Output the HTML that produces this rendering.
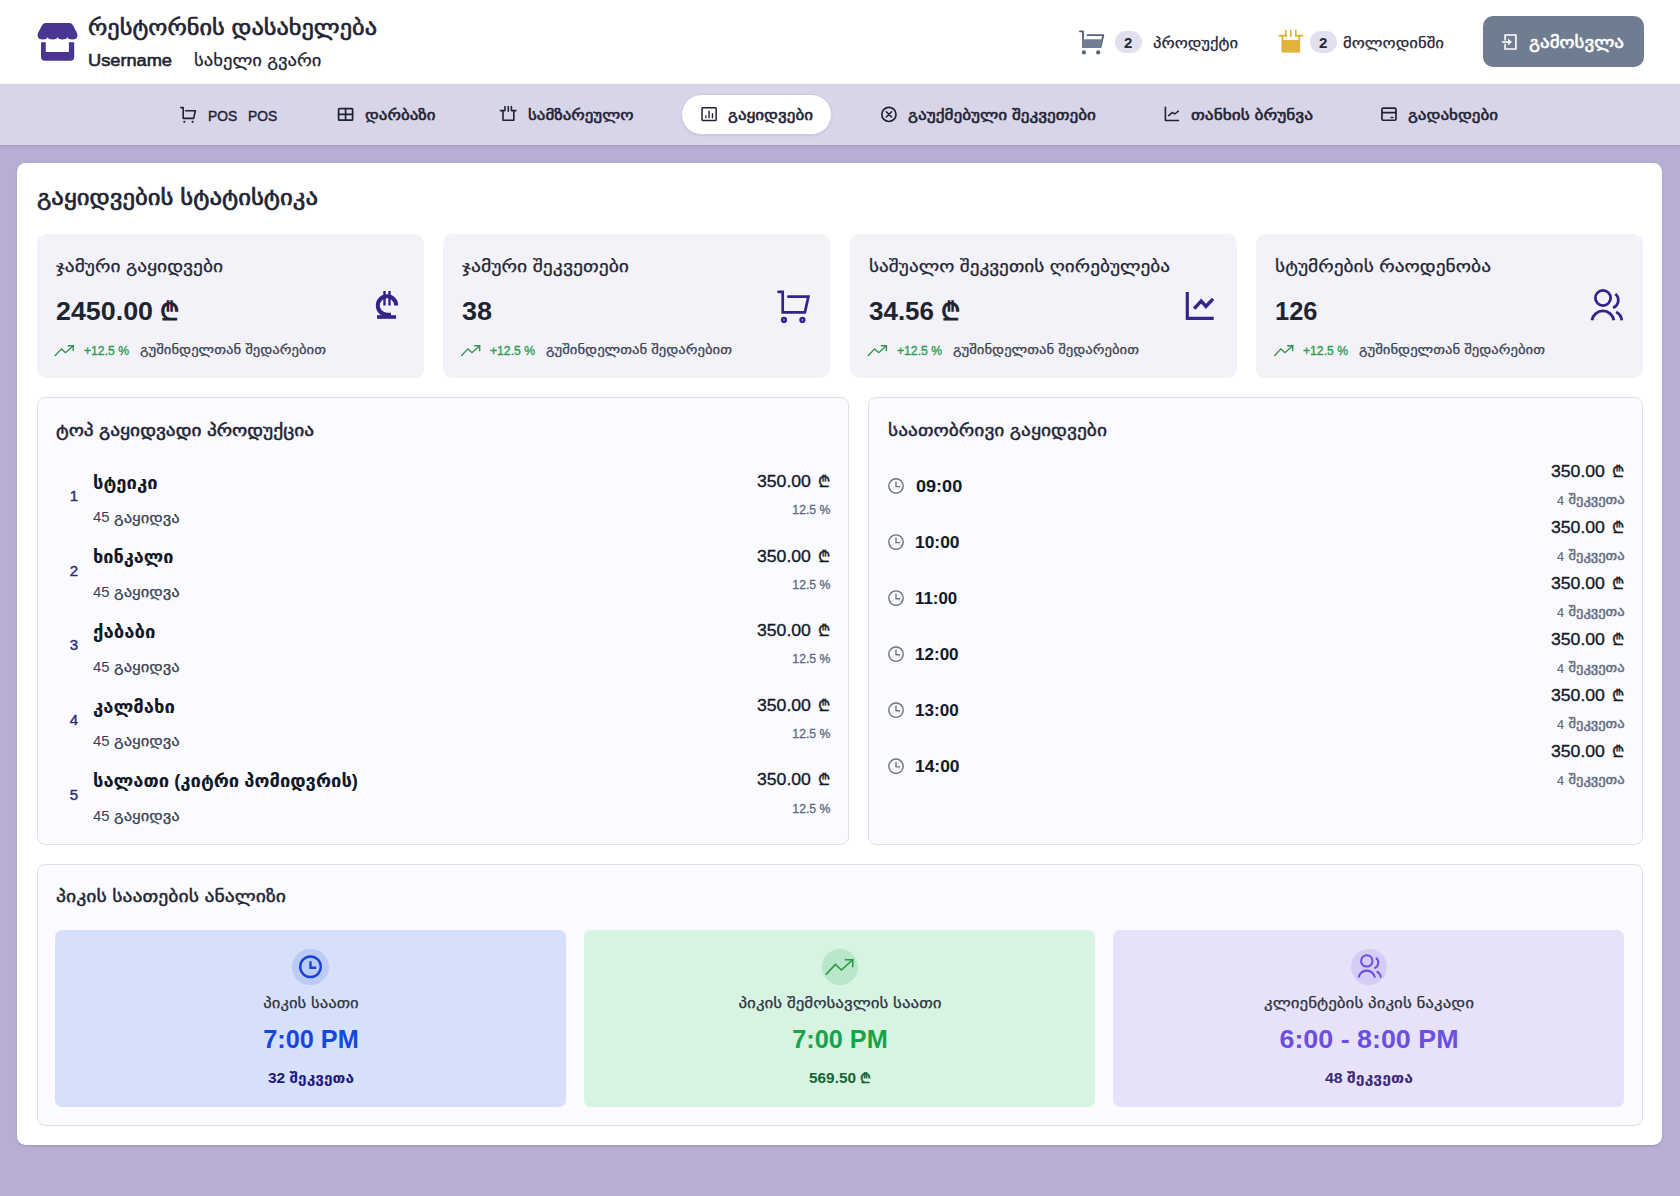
<!DOCTYPE html>
<html lang="ka">
<head>
<meta charset="utf-8">
<title>გაყიდვების სტატისტიკა</title>
<style>
html,body{margin:0;padding:0}
body{width:1680px;height:1196px;position:relative;overflow:hidden;background:#b8add3;
 font-family:"Liberation Sans","DejaVu Sans",sans-serif;color:#1f2433}
.sec{position:absolute;left:0;top:0;width:1680px;height:1196px;display:block}
.b{position:absolute;box-sizing:border-box}
.t{position:absolute;white-space:nowrap;line-height:1;display:block;-webkit-text-stroke-color:currentColor}
svg{position:absolute;overflow:visible}
.hdr{left:0;top:0;width:1680px;height:84px;background:#fff}
.nav{left:0;top:84px;width:1680px;height:61px;background:#d9d5e9;box-shadow:0 1px 3px rgba(70,60,100,.2)}
.pill{left:681.4px;top:93.8px;width:151px;height:41.4px;border-radius:21px;background:#fff;border:1px solid #cfc9e2;box-shadow:0 1px 2px rgba(60,40,110,.10)}
.main{left:17.4px;top:163.3px;width:1644.8px;height:981.6px;background:#fff;border-radius:8.5px;box-shadow:0 1px 2px rgba(60,50,90,.22)}
.stat{top:234.1px;width:387px;height:143.8px;background:#f3f2f9;border-radius:9px}
.panel{background:#fafaff;border:1px solid #e0dfe9;border-radius:8px}
.badge{top:30.8px;width:27.5px;height:22.5px;border-radius:11px;background:#e1e0ef}
.btn{left:1482.6px;top:16.3px;width:161px;height:50.8px;border-radius:10px;background:#707d91}
.pk{top:929.6px;width:511.1px;height:177.5px;border-radius:7px}
.circ{top:948.5px;width:36.5px;height:36.5px;border-radius:50%}
</style>
</head>
<body>
<header class="sec">
<div class="b hdr"></div>
<div class="b badge" style="left:1114.5px"></div>
<div class="b badge" style="left:1309.5px"></div>
<div class="b btn"></div>
<svg width="1680" height="1196" viewBox="0 0 1680 1196" style="left:0;top:0" aria-hidden="true">
<path fill="#4b3593" d="M45.6,23 H69.4 Q71.7,23 72.8,25 L76.8,32.6 Q77.8,34.6 77.2,36.8 A4.92,2.9 0 0 1 67.37,36.8 A4.92,2.9 0 0 1 57.55,36.8 A4.92,2.9 0 0 1 47.72,36.8 A4.92,2.9 0 0 1 37.9,36.8 Q37.2,34.6 38.2,32.6 L42.2,25 Q43.3,23 45.6,23 Z"/>
<path fill="#4b3593" d="M41,42.3 H45.8 V51.9 H68.9 V42.3 H74.2 V57 Q74.2,60.7 70.5,60.7 H44.7 Q41,60.7 41,57 Z"/>
<g stroke="#566277" stroke-width="1.9" fill="none" stroke-linecap="round" stroke-linejoin="round"><path d="M1080,31.4 H1083 V47"/><path d="M1087.6,35.1 H1103.3 L1100.6,47"/></g>
<path fill="#6f7e95" d="M1082.1,39.3 H1102.6 L1100.6,47.9 H1082.1 Z"/>
<circle cx="1083.9" cy="52.4" r="2.1" fill="#566277"/><circle cx="1098.2" cy="52.4" r="2.1" fill="#566277"/>
<g stroke="#e2b33c" fill="none" stroke-linecap="round"><path stroke-width="1.9" d="M1279.3,35.8 H1285.8 M1295.8,35.8 H1302.2"/><path stroke-width="1.7" d="M1285.8,30.6 V36 M1290.8,30.6 V36.4 M1295.8,30.6 V36"/><path stroke-width="1.8" stroke-linecap="butt" d="M1282.4,36 V41 M1299.2,36 V41"/></g>
<rect x="1281.5" y="40" width="18.6" height="12.6" fill="#e2b33c"/>
<g stroke="#fff" stroke-width="1.6" fill="none" stroke-linecap="butt" stroke-linejoin="miter"><path d="M1505.1,40.4 V35 H1515.9 V49 H1505.1 V43.8"/><path d="M1502,42 H1509"/></g><path fill="#fff" d="M1508,38.6 L1512,42 L1508,45.4 Z"/>
</svg>
<span class="t" style="font-size:21.4px;top:17.5px;-webkit-text-stroke:0.6px;left:88.3px;transform-origin:0 50%;transform:scaleX(1.1366);">რესტორნის დასახელება</span>
<span class="t" style="font-size:17px;top:52.22px;-webkit-text-stroke:0.6px;left:88.3px;transform-origin:0 50%;transform:scaleX(1.0711);">Username</span>
<span class="t" style="font-size:17.12px;top:51.92px;-webkit-text-stroke:0.25px;left:194.2px;transform-origin:0 50%;transform:scaleX(1.0902);">სახელი გვარი</span>
<span class="t" style="font-size:15px;top:34.71px;color:#1f2937;font-weight:700;left:1128.2px;transform:translateX(-50%) scaleX(1.0000);">2</span>
<span class="t" style="font-size:14.98px;top:35.33px;-webkit-text-stroke:0.25px;left:1152.5px;transform-origin:0 50%;transform:scaleX(1.1102);">პროდუქტი</span>
<span class="t" style="font-size:15px;top:34.71px;color:#1f2937;font-weight:700;left:1323.2px;transform:translateX(-50%) scaleX(1.0000);">2</span>
<span class="t" style="font-size:14.98px;top:35.33px;-webkit-text-stroke:0.25px;left:1343px;transform-origin:0 50%;transform:scaleX(1.1147);">მოლოდინში</span>
<span class="t" style="font-size:17.12px;top:34.42px;color:#fff;-webkit-text-stroke:0.55px;left:1529px;transform-origin:0 50%;transform:scaleX(1.1093);">გამოსვლა</span>
</header>
<nav class="sec">
<div class="b nav"></div>
<div class="b pill"></div>
<svg width="1680" height="1196" viewBox="0 0 1680 1196" style="left:0;top:0" aria-hidden="true">
<g stroke="#1f2233" stroke-width="1.6" fill="none" stroke-linejoin="round" stroke-linecap="round">
<path d="M180.8,107.6 H183.2 V118.4 H193.6 L195.4,110.8 H185.6"/>
<rect x="338.6" y="108.6" width="14" height="11.6" rx="0.8" stroke-width="1.7"/><path stroke-width="1.7" d="M345.6,108.6 V120.2 M338.6,114.4 H352.6"/>
<path d="M500.4,110.6 H505 V106.6 M511.4,106.6 V110.6 H516 M508.3,106.6 V111.2 M503,110.6 V120.3 H513.8 V110.6"/>
<rect x="702.05" y="107.75" width="14.1" height="12.7" rx="0.7" stroke-width="1.5"/><path stroke-width="1.4" d="M705.8,116 V117.6 M709.05,111.3 V117.8 M712.45,113.6 V117.8"/>
<circle cx="888.9" cy="114.4" r="7.1" stroke-width="1.7"/><path d="M886.3,111.8 L891.5,117 M891.5,111.8 L886.3,117"/>
<path d="M1165.4,107.4 V120.5 H1178.4"/><path stroke-width="1.5" d="M1168.7,115.6 L1172.4,112.4 L1174.7,114 L1178.3,111.1"/>
<rect x="1381.95" y="108.15" width="14" height="12.1" rx="1.2" stroke-width="1.7"/><path d="M1381.95,112.65 H1395.95 M1391.2,117.45 H1392.8"/>
</g>
<circle cx="184.3" cy="121.8" r="1.1" fill="#1f2233"/><circle cx="192.6" cy="121.8" r="1.1" fill="#1f2233"/>
</svg>
<span class="t" style="font-size:15px;top:107.51px;color:#1f2233;-webkit-text-stroke:0.45px;left:207.5px;transform-origin:0 50%;transform:scaleX(0.9215);">POS</span>
<span class="t" style="font-size:15px;top:107.51px;color:#1f2233;-webkit-text-stroke:0.45px;left:247.5px;transform-origin:0 50%;transform:scaleX(0.9215);">POS</span>
<span class="t" style="font-size:14.98px;top:107.33px;color:#1f2233;-webkit-text-stroke:0.55px;left:365.3px;transform-origin:0 50%;transform:scaleX(1.1305);">დარბაზი</span>
<span class="t" style="font-size:14.98px;top:107.33px;color:#1f2233;-webkit-text-stroke:0.55px;left:527.5px;transform-origin:0 50%;transform:scaleX(1.1299);">სამზარეულო</span>
<span class="t" style="font-size:14.98px;top:107.33px;color:#1f2233;-webkit-text-stroke:0.55px;left:728.3px;transform-origin:0 50%;transform:scaleX(1.1362);">გაყიდვები</span>
<span class="t" style="font-size:14.98px;top:107.33px;color:#1f2233;-webkit-text-stroke:0.55px;left:908px;transform-origin:0 50%;transform:scaleX(1.1465);">გაუქმებული შეკვეთები</span>
<span class="t" style="font-size:14.98px;top:107.33px;color:#1f2233;-webkit-text-stroke:0.55px;left:1190.7px;transform-origin:0 50%;transform:scaleX(1.1559);">თანხის ბრუნვა</span>
<span class="t" style="font-size:14.98px;top:107.33px;color:#1f2233;-webkit-text-stroke:0.55px;left:1407.8px;transform-origin:0 50%;transform:scaleX(1.1348);">გადახდები</span>
</nav>
<main class="sec">
<div class="b main"></div>
<div class="b stat" style="left:37px"></div>
<div class="b stat" style="left:443px"></div>
<div class="b stat" style="left:850px"></div>
<div class="b stat" style="left:1256px"></div>
<div class="b panel" style="left:36.9px;top:397.1px;width:812.2px;height:448px"></div>
<div class="b panel" style="left:868.2px;top:397.1px;width:775px;height:448px"></div>
<div class="b panel" style="left:36.9px;top:864px;width:1606.3px;height:261.9px"></div>
<div class="b pk" style="left:55px;background:#d6e0fb"></div>
<div class="b pk" style="left:584.2px;background:#d7f4e2"></div>
<div class="b pk" style="left:1113.4px;background:#e7e2fa"></div>
<div class="b circ" style="left:292.2px;background:#bccbf6"></div>
<div class="b circ" style="left:821.6px;background:#b9e7c9"></div>
<div class="b circ" style="left:1350.7px;background:#d6cdf7"></div>
<svg width="1680" height="1196" viewBox="0 0 1680 1196" style="left:0;top:0" aria-hidden="true">
<g stroke="#33238a" fill="none"><path stroke-width="4" d="M396.2,305.5 A9.2,9.2 0 1 0 387,314.7 H391" stroke-linejoin="round"/><path stroke-width="3.6" d="M377,317 H396.1"/><path stroke-width="2.4" d="M384.5,291 V305.5 M389.5,291 V305.5"/></g>
<g stroke="#33238a" stroke-width="2.7" fill="none" stroke-linejoin="miter" stroke-linecap="round"><path d="M778.5,291.8 H782.7 V312.4 H804.9 L808.4,296.6 H788.4"/><circle cx="784" cy="319.9" r="1.9" stroke-width="2.4"/><circle cx="802.4" cy="319.9" r="1.9" stroke-width="2.4"/></g>
<g stroke="#33238a" fill="none"><path stroke-width="3.1" d="M1187.3,292.1 V318.35 H1213.7"/><path stroke-width="3.4" stroke-linejoin="miter" d="M1194.2,308.6 L1201.2,301 L1205.9,306.4 L1213,298.9"/></g>
<g transform="translate(1591,288.75) scale(1)" stroke="#33238a" stroke-width="2.8" fill="none" stroke-linecap="butt"><circle cx="12" cy="9.25" r="7.6"/><path d="M0.9,31.55 A11.15,11.15 0 0 1 22.9,31.55"/><path d="M24.3,5.25 A8,8 0 0 1 22,19.05"/><path d="M25.2,23.25 A11,11 0 0 1 30.8,31.55"/></g>
<g transform="translate(55.2,345.7) scale(1)" stroke="#2d9149" stroke-width="1.35" fill="none" stroke-linejoin="miter" stroke-linecap="round"><path d="M0,9.8 L6.2,3.2 L10.3,7 L18,0"/><path d="M13,0 H18 V4.8"/></g>
<g transform="translate(461.7,345.7) scale(1)" stroke="#2d9149" stroke-width="1.35" fill="none" stroke-linejoin="miter" stroke-linecap="round"><path d="M0,9.8 L6.2,3.2 L10.3,7 L18,0"/><path d="M13,0 H18 V4.8"/></g>
<g transform="translate(868.4,345.7) scale(1)" stroke="#2d9149" stroke-width="1.35" fill="none" stroke-linejoin="miter" stroke-linecap="round"><path d="M0,9.8 L6.2,3.2 L10.3,7 L18,0"/><path d="M13,0 H18 V4.8"/></g>
<g transform="translate(1274.7,345.7) scale(1)" stroke="#2d9149" stroke-width="1.35" fill="none" stroke-linejoin="miter" stroke-linecap="round"><path d="M0,9.8 L6.2,3.2 L10.3,7 L18,0"/><path d="M13,0 H18 V4.8"/></g>
<g stroke="#6b7280" stroke-width="1.4" fill="none" stroke-linecap="round" stroke-linejoin="round"><circle cx="896" cy="486.00" r="7.2"/><path d="M896,482.00 V486.60 H899.8"/></g>
<g stroke="#6b7280" stroke-width="1.4" fill="none" stroke-linecap="round" stroke-linejoin="round"><circle cx="896" cy="542.05" r="7.2"/><path d="M896,538.05 V542.65 H899.8"/></g>
<g stroke="#6b7280" stroke-width="1.4" fill="none" stroke-linecap="round" stroke-linejoin="round"><circle cx="896" cy="598.10" r="7.2"/><path d="M896,594.10 V598.70 H899.8"/></g>
<g stroke="#6b7280" stroke-width="1.4" fill="none" stroke-linecap="round" stroke-linejoin="round"><circle cx="896" cy="654.15" r="7.2"/><path d="M896,650.15 V654.75 H899.8"/></g>
<g stroke="#6b7280" stroke-width="1.4" fill="none" stroke-linecap="round" stroke-linejoin="round"><circle cx="896" cy="710.20" r="7.2"/><path d="M896,706.20 V710.80 H899.8"/></g>
<g stroke="#6b7280" stroke-width="1.4" fill="none" stroke-linecap="round" stroke-linejoin="round"><circle cx="896" cy="766.25" r="7.2"/><path d="M896,762.25 V766.85 H899.8"/></g>
<g stroke="#1844d2" stroke-width="2.4" fill="none" stroke-linecap="butt" stroke-linejoin="miter"><circle cx="310.5" cy="966.75" r="10.3"/><path d="M310.5,961.2 V967.8 H316.2"/></g>
<g transform="translate(826.3,959.7) scale(1.47)" stroke="#2e9848" stroke-width="1.1" fill="none" stroke-linejoin="miter" stroke-linecap="round"><path d="M0,9.8 L6.2,3.2 L10.3,7 L18,0"/><path d="M13,0 H18 V4.8"/></g>
<g transform="translate(1357.8,953.96) scale(0.75)" stroke="#6b4ee0" stroke-width="2.7" fill="none" stroke-linecap="butt"><circle cx="12" cy="9.25" r="7.6"/><path d="M0.9,31.55 A11.15,11.15 0 0 1 22.9,31.55"/><path d="M24.3,5.25 A8,8 0 0 1 22,19.05"/><path d="M25.2,23.25 A11,11 0 0 1 30.8,31.55"/></g>
</svg>
<span class="t" style="font-size:21.4px;top:188.1px;-webkit-text-stroke:0.65px;left:37.1px;transform-origin:0 50%;transform:scaleX(1.1556);">გაყიდვების სტატისტიკა</span>
<span class="t" style="font-size:17.12px;top:258.02px;-webkit-text-stroke:0.25px;left:55.5px;transform-origin:0 50%;transform:scaleX(1.1355);">ჯამური გაყიდვები</span>
<span class="t" style="font-size:25px;top:298.85px;color:#1f2430;font-weight:700;left:55.5px;transform-origin:0 50%;transform:scaleX(1.0733);">2450.00</span>
<span class="t" style="font-size:25px;top:298.85px;color:#1f2430;font-weight:700;left:159.5px;transform-origin:0 50%;transform:scaleX(1.0000);">₾</span>
<span class="t" style="font-size:12px;top:344.85px;color:#2f9d4e;-webkit-text-stroke:0.35px;left:83.5px;transform-origin:0 50%;transform:scaleX(1.0141);">+12.5 %</span>
<span class="t" style="font-size:12.84px;top:344.14px;color:#3b4252;-webkit-text-stroke:0.25px;left:139.7px;transform-origin:0 50%;transform:scaleX(1.1460);">გუშინდელთან შედარებით</span>
<span class="t" style="font-size:17.12px;top:258.02px;-webkit-text-stroke:0.25px;left:462px;transform-origin:0 50%;transform:scaleX(1.1485);">ჯამური შეკვეთები</span>
<span class="t" style="font-size:25px;top:298.85px;color:#1f2430;font-weight:700;left:462px;transform-origin:0 50%;transform:scaleX(1.0787);">38</span>
<span class="t" style="font-size:12px;top:344.85px;color:#2f9d4e;-webkit-text-stroke:0.35px;left:490px;transform-origin:0 50%;transform:scaleX(1.0141);">+12.5 %</span>
<span class="t" style="font-size:12.84px;top:344.14px;color:#3b4252;-webkit-text-stroke:0.25px;left:546.2px;transform-origin:0 50%;transform:scaleX(1.1460);">გუშინდელთან შედარებით</span>
<span class="t" style="font-size:17.12px;top:258.02px;-webkit-text-stroke:0.25px;left:868.7px;transform-origin:0 50%;transform:scaleX(1.1258);">საშუალო შეკვეთის ღირებულება</span>
<span class="t" style="font-size:25px;top:298.85px;color:#1f2430;font-weight:700;left:868.7px;transform-origin:0 50%;transform:scaleX(1.0390);">34.56</span>
<span class="t" style="font-size:25px;top:298.85px;color:#1f2430;font-weight:700;left:940.7px;transform-origin:0 50%;transform:scaleX(1.0000);">₾</span>
<span class="t" style="font-size:12px;top:344.85px;color:#2f9d4e;-webkit-text-stroke:0.35px;left:896.7px;transform-origin:0 50%;transform:scaleX(1.0141);">+12.5 %</span>
<span class="t" style="font-size:12.84px;top:344.14px;color:#3b4252;-webkit-text-stroke:0.25px;left:952.9px;transform-origin:0 50%;transform:scaleX(1.1460);">გუშინდელთან შედარებით</span>
<span class="t" style="font-size:17.12px;top:258.02px;-webkit-text-stroke:0.25px;left:1275px;transform-origin:0 50%;transform:scaleX(1.1363);">სტუმრების რაოდენობა</span>
<span class="t" style="font-size:25px;top:298.85px;color:#1f2430;font-weight:700;left:1275px;transform-origin:0 50%;transform:scaleX(1.0187);">126</span>
<span class="t" style="font-size:12px;top:344.85px;color:#2f9d4e;-webkit-text-stroke:0.35px;left:1303px;transform-origin:0 50%;transform:scaleX(1.0141);">+12.5 %</span>
<span class="t" style="font-size:12.84px;top:344.14px;color:#3b4252;-webkit-text-stroke:0.25px;left:1359.2px;transform-origin:0 50%;transform:scaleX(1.1460);">გუშინდელთან შედარებით</span>
<span class="t" style="font-size:17.12px;top:421.72px;-webkit-text-stroke:0.5px;left:55.7px;transform-origin:0 50%;transform:scaleX(1.1303);">ტოპ გაყიდვადი პროდუქცია</span>
<span class="t" style="font-size:15px;top:488.11px;color:#2d2a7a;-webkit-text-stroke:0.4px;left:74px;transform:translateX(-50%) scaleX(1.0000);">1</span>
<span class="t" style="font-size:17.66px;top:474.56px;color:#111827;font-weight:700;left:92.5px;transform-origin:0 50%;transform:scaleX(1.0419);">სტეიკი</span>
<span class="t" style="font-size:14px;top:510.36px;color:#374151;left:92.5px;transform-origin:0 50%;transform:scaleX(1.0592);">45</span>
<span class="t" style="font-size:14.98px;top:509.53px;color:#374151;-webkit-text-stroke:0.25px;left:113.5px;transform-origin:0 50%;transform:scaleX(1.1077);">გაყიდვა</span>
<span class="t" style="font-size:16px;top:473.86px;color:#111827;-webkit-text-stroke:0.3px;right:868.8px;transform-origin:100% 50%;transform:scaleX(1.1034);">350.00</span>
<span class="t" style="font-size:16px;top:473.86px;color:#111827;-webkit-text-stroke:0.3px;left:823.6px;transform:translateX(-50%) scaleX(1.0000);">₾</span>
<span class="t" style="font-size:12px;top:503.95px;color:#5d6980;-webkit-text-stroke:0.3px;right:850px;transform-origin:100% 50%;transform:scaleX(1.0171);">12.5 %</span>
<span class="t" style="font-size:15px;top:562.76px;color:#2d2a7a;-webkit-text-stroke:0.4px;left:74px;transform:translateX(-50%) scaleX(1.0000);">2</span>
<span class="t" style="font-size:17.66px;top:549.21px;color:#111827;font-weight:700;left:92.5px;transform-origin:0 50%;transform:scaleX(1.0251);">ხინკალი</span>
<span class="t" style="font-size:14px;top:585.01px;color:#374151;left:92.5px;transform-origin:0 50%;transform:scaleX(1.0592);">45</span>
<span class="t" style="font-size:14.98px;top:584.18px;color:#374151;-webkit-text-stroke:0.25px;left:113.5px;transform-origin:0 50%;transform:scaleX(1.1077);">გაყიდვა</span>
<span class="t" style="font-size:16px;top:548.51px;color:#111827;-webkit-text-stroke:0.3px;right:868.8px;transform-origin:100% 50%;transform:scaleX(1.1034);">350.00</span>
<span class="t" style="font-size:16px;top:548.51px;color:#111827;-webkit-text-stroke:0.3px;left:823.6px;transform:translateX(-50%) scaleX(1.0000);">₾</span>
<span class="t" style="font-size:12px;top:578.6px;color:#5d6980;-webkit-text-stroke:0.3px;right:850px;transform-origin:100% 50%;transform:scaleX(1.0171);">12.5 %</span>
<span class="t" style="font-size:15px;top:637.41px;color:#2d2a7a;-webkit-text-stroke:0.4px;left:74px;transform:translateX(-50%) scaleX(1.0000);">3</span>
<span class="t" style="font-size:17.66px;top:623.86px;color:#111827;font-weight:700;left:92.5px;transform-origin:0 50%;transform:scaleX(1.0543);">ქაბაბი</span>
<span class="t" style="font-size:14px;top:659.66px;color:#374151;left:92.5px;transform-origin:0 50%;transform:scaleX(1.0592);">45</span>
<span class="t" style="font-size:14.98px;top:658.83px;color:#374151;-webkit-text-stroke:0.25px;left:113.5px;transform-origin:0 50%;transform:scaleX(1.1077);">გაყიდვა</span>
<span class="t" style="font-size:16px;top:623.16px;color:#111827;-webkit-text-stroke:0.3px;right:868.8px;transform-origin:100% 50%;transform:scaleX(1.1034);">350.00</span>
<span class="t" style="font-size:16px;top:623.16px;color:#111827;-webkit-text-stroke:0.3px;left:823.6px;transform:translateX(-50%) scaleX(1.0000);">₾</span>
<span class="t" style="font-size:12px;top:653.25px;color:#5d6980;-webkit-text-stroke:0.3px;right:850px;transform-origin:100% 50%;transform:scaleX(1.0171);">12.5 %</span>
<span class="t" style="font-size:15px;top:712.06px;color:#2d2a7a;-webkit-text-stroke:0.4px;left:74px;transform:translateX(-50%) scaleX(1.0000);">4</span>
<span class="t" style="font-size:17.66px;top:698.51px;color:#111827;font-weight:700;left:92.5px;transform-origin:0 50%;transform:scaleX(1.0465);">კალმახი</span>
<span class="t" style="font-size:14px;top:734.31px;color:#374151;left:92.5px;transform-origin:0 50%;transform:scaleX(1.0592);">45</span>
<span class="t" style="font-size:14.98px;top:733.48px;color:#374151;-webkit-text-stroke:0.25px;left:113.5px;transform-origin:0 50%;transform:scaleX(1.1077);">გაყიდვა</span>
<span class="t" style="font-size:16px;top:697.81px;color:#111827;-webkit-text-stroke:0.3px;right:868.8px;transform-origin:100% 50%;transform:scaleX(1.1034);">350.00</span>
<span class="t" style="font-size:16px;top:697.81px;color:#111827;-webkit-text-stroke:0.3px;left:823.6px;transform:translateX(-50%) scaleX(1.0000);">₾</span>
<span class="t" style="font-size:12px;top:727.9px;color:#5d6980;-webkit-text-stroke:0.3px;right:850px;transform-origin:100% 50%;transform:scaleX(1.0171);">12.5 %</span>
<span class="t" style="font-size:15px;top:786.71px;color:#2d2a7a;-webkit-text-stroke:0.4px;left:74px;transform:translateX(-50%) scaleX(1.0000);">5</span>
<span class="t" style="font-size:17.66px;top:773.16px;color:#111827;font-weight:700;left:92.5px;transform-origin:0 50%;transform:scaleX(1.0406);">სალათი (კიტრი პომიდვრის)</span>
<span class="t" style="font-size:14px;top:808.96px;color:#374151;left:92.5px;transform-origin:0 50%;transform:scaleX(1.0592);">45</span>
<span class="t" style="font-size:14.98px;top:808.13px;color:#374151;-webkit-text-stroke:0.25px;left:113.5px;transform-origin:0 50%;transform:scaleX(1.1077);">გაყიდვა</span>
<span class="t" style="font-size:16px;top:772.46px;color:#111827;-webkit-text-stroke:0.3px;right:868.8px;transform-origin:100% 50%;transform:scaleX(1.1034);">350.00</span>
<span class="t" style="font-size:16px;top:772.46px;color:#111827;-webkit-text-stroke:0.3px;left:823.6px;transform:translateX(-50%) scaleX(1.0000);">₾</span>
<span class="t" style="font-size:12px;top:802.55px;color:#5d6980;-webkit-text-stroke:0.3px;right:850px;transform-origin:100% 50%;transform:scaleX(1.0171);">12.5 %</span>
<span class="t" style="font-size:17.12px;top:421.72px;-webkit-text-stroke:0.4px;left:887.5px;transform-origin:0 50%;transform:scaleX(1.1366);">საათობრივი გაყიდვები</span>
<span class="t" style="font-size:17px;top:478.02px;color:#111827;font-weight:700;left:915.5px;transform-origin:0 50%;transform:scaleX(1.0625);">09:00</span>
<span class="t" style="font-size:16px;top:464.16px;color:#111827;-webkit-text-stroke:0.3px;right:74.6px;transform-origin:100% 50%;transform:scaleX(1.1034);">350.00</span>
<span class="t" style="font-size:16px;top:464.16px;color:#111827;-webkit-text-stroke:0.3px;left:1617.8px;transform:translateX(-50%) scaleX(1.0000);">₾</span>
<span class="t" style="font-size:12px;top:494.55px;color:#5d6980;-webkit-text-stroke:0.2px;left:1557px;transform-origin:0 50%;transform:scaleX(1.0467);">4</span>
<span class="t" style="font-size:12.84px;top:493.84px;color:#5d6980;-webkit-text-stroke:0.4px;right:55.7px;transform-origin:100% 50%;transform:scaleX(1.1295);">შეკვეთა</span>
<span class="t" style="font-size:17px;top:534.07px;color:#111827;font-weight:700;left:914.6px;transform-origin:0 50%;transform:scaleX(1.0234);">10:00</span>
<span class="t" style="font-size:16px;top:520.21px;color:#111827;-webkit-text-stroke:0.3px;right:74.6px;transform-origin:100% 50%;transform:scaleX(1.1034);">350.00</span>
<span class="t" style="font-size:16px;top:520.21px;color:#111827;-webkit-text-stroke:0.3px;left:1617.8px;transform:translateX(-50%) scaleX(1.0000);">₾</span>
<span class="t" style="font-size:12px;top:550.6px;color:#5d6980;-webkit-text-stroke:0.2px;left:1557px;transform-origin:0 50%;transform:scaleX(1.0467);">4</span>
<span class="t" style="font-size:12.84px;top:549.89px;color:#5d6980;-webkit-text-stroke:0.4px;right:55.7px;transform-origin:100% 50%;transform:scaleX(1.1295);">შეკვეთა</span>
<span class="t" style="font-size:17px;top:590.12px;color:#111827;font-weight:700;left:914.6px;transform-origin:0 50%;transform:scaleX(0.9918);">11:00</span>
<span class="t" style="font-size:16px;top:576.26px;color:#111827;-webkit-text-stroke:0.3px;right:74.6px;transform-origin:100% 50%;transform:scaleX(1.1034);">350.00</span>
<span class="t" style="font-size:16px;top:576.26px;color:#111827;-webkit-text-stroke:0.3px;left:1617.8px;transform:translateX(-50%) scaleX(1.0000);">₾</span>
<span class="t" style="font-size:12px;top:606.65px;color:#5d6980;-webkit-text-stroke:0.2px;left:1557px;transform-origin:0 50%;transform:scaleX(1.0467);">4</span>
<span class="t" style="font-size:12.84px;top:605.94px;color:#5d6980;-webkit-text-stroke:0.4px;right:55.7px;transform-origin:100% 50%;transform:scaleX(1.1295);">შეკვეთა</span>
<span class="t" style="font-size:17px;top:646.17px;color:#111827;font-weight:700;left:914.6px;transform-origin:0 50%;transform:scaleX(1.0027);">12:00</span>
<span class="t" style="font-size:16px;top:632.31px;color:#111827;-webkit-text-stroke:0.3px;right:74.6px;transform-origin:100% 50%;transform:scaleX(1.1034);">350.00</span>
<span class="t" style="font-size:16px;top:632.31px;color:#111827;-webkit-text-stroke:0.3px;left:1617.8px;transform:translateX(-50%) scaleX(1.0000);">₾</span>
<span class="t" style="font-size:12px;top:662.7px;color:#5d6980;-webkit-text-stroke:0.2px;left:1557px;transform-origin:0 50%;transform:scaleX(1.0467);">4</span>
<span class="t" style="font-size:12.84px;top:661.99px;color:#5d6980;-webkit-text-stroke:0.4px;right:55.7px;transform-origin:100% 50%;transform:scaleX(1.1295);">შეკვეთა</span>
<span class="t" style="font-size:17px;top:702.22px;color:#111827;font-weight:700;left:914.6px;transform-origin:0 50%;transform:scaleX(1.0050);">13:00</span>
<span class="t" style="font-size:16px;top:688.36px;color:#111827;-webkit-text-stroke:0.3px;right:74.6px;transform-origin:100% 50%;transform:scaleX(1.1034);">350.00</span>
<span class="t" style="font-size:16px;top:688.36px;color:#111827;-webkit-text-stroke:0.3px;left:1617.8px;transform:translateX(-50%) scaleX(1.0000);">₾</span>
<span class="t" style="font-size:12px;top:718.75px;color:#5d6980;-webkit-text-stroke:0.2px;left:1557px;transform-origin:0 50%;transform:scaleX(1.0467);">4</span>
<span class="t" style="font-size:12.84px;top:718.04px;color:#5d6980;-webkit-text-stroke:0.4px;right:55.7px;transform-origin:100% 50%;transform:scaleX(1.1295);">შეკვეთა</span>
<span class="t" style="font-size:17px;top:758.27px;color:#111827;font-weight:700;left:914.6px;transform-origin:0 50%;transform:scaleX(1.0234);">14:00</span>
<span class="t" style="font-size:16px;top:744.41px;color:#111827;-webkit-text-stroke:0.3px;right:74.6px;transform-origin:100% 50%;transform:scaleX(1.1034);">350.00</span>
<span class="t" style="font-size:16px;top:744.41px;color:#111827;-webkit-text-stroke:0.3px;left:1617.8px;transform:translateX(-50%) scaleX(1.0000);">₾</span>
<span class="t" style="font-size:12px;top:774.8px;color:#5d6980;-webkit-text-stroke:0.2px;left:1557px;transform-origin:0 50%;transform:scaleX(1.0467);">4</span>
<span class="t" style="font-size:12.84px;top:774.09px;color:#5d6980;-webkit-text-stroke:0.4px;right:55.7px;transform-origin:100% 50%;transform:scaleX(1.1295);">შეკვეთა</span>
<span class="t" style="font-size:17.12px;top:888.02px;-webkit-text-stroke:0.4px;left:55.7px;transform-origin:0 50%;transform:scaleX(1.1515);">პიკის საათების ანალიზი</span>
<span class="t" style="font-size:14.98px;top:994.83px;color:#2b3140;-webkit-text-stroke:0.25px;left:310.5px;transform:translateX(-50%) scaleX(1.1172);">პიკის საათი</span>
<span class="t" style="font-size:25.5px;top:1027.33px;color:#1547e0;font-weight:700;left:310.5px;transform:translateX(-50%) scaleX(0.9909);">7:00 PM</span>
<span class="t" style="font-size:14.98px;top:1069.83px;color:#1e1b80;font-weight:700;left:310.5px;transform:translateX(-50%) scaleX(1.0344);">32 შეკვეთა</span>
<span class="t" style="font-size:14.98px;top:994.83px;color:#2b3140;-webkit-text-stroke:0.25px;left:840px;transform:translateX(-50%) scaleX(1.1330);">პიკის შემოსავლის საათი</span>
<span class="t" style="font-size:25.5px;top:1027.33px;color:#17a34a;font-weight:700;left:840px;transform:translateX(-50%) scaleX(0.9909);">7:00 PM</span>
<span class="t" style="font-size:14px;top:1070.66px;color:#176535;font-weight:700;left:808.7px;transform-origin:0 50%;transform:scaleX(1.0974);">569.50</span>
<span class="t" style="font-size:14px;top:1070.66px;color:#176535;font-weight:700;left:865px;transform:translateX(-50%) scaleX(1.0000);">₾</span>
<span class="t" style="font-size:14.98px;top:994.83px;color:#2b3140;-webkit-text-stroke:0.25px;left:1369px;transform:translateX(-50%) scaleX(1.1352);">კლიენტების პიკის ნაკადი</span>
<span class="t" style="font-size:25.5px;top:1027.33px;color:#6b4fe0;font-weight:700;left:1369px;transform:translateX(-50%) scaleX(1.0525);">6:00 - 8:00 PM</span>
<span class="t" style="font-size:14.98px;top:1069.83px;color:#3b2a78;font-weight:700;left:1369px;transform:translateX(-50%) scaleX(1.0584);">48 შეკვეთა</span>
</main>
</body>
</html>
